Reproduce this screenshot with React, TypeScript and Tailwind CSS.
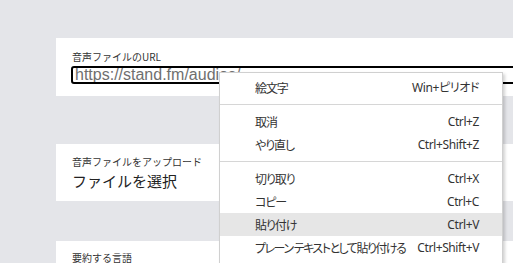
const JP = "font-['Noto_Sans_CJK_JP',sans-serif]";

type Item = { label: string; keys: string; active?: boolean; tight?: boolean } | 'sep';

const MENU: Item[] = [
  { label: '絵文字', keys: 'Win+ピリオド' },
  'sep',
  { label: '取消', keys: 'Ctrl+Z' },
  { label: 'やり直し', keys: 'Ctrl+Shift+Z' },
  'sep',
  { label: '切り取り', keys: 'Ctrl+X' },
  { label: 'コピー', keys: 'Ctrl+C' },
  { label: '貼り付け', keys: 'Ctrl+V', active: true },
  { label: 'プレーン\u00a0テキストとして貼り付ける', keys: 'Ctrl+Shift+V', tight: true },
];

function ContextMenu() {
  return (
    <div className="absolute left-[219px] top-[72px] w-[284px] border border-[#d0d0d0] bg-white pt-[3px] pb-2 shadow-[2px_2px_3px_rgba(0,0,0,0.18)]">
      {MENU.map((item, i) =>
        item === 'sep' ? (
          <div key={i} className="py-[5px]">
            <div className="h-px bg-[#d6d6d6]" />
          </div>
        ) : (
          <div
            key={i}
            className={
              'flex h-[23px] items-center justify-between gap-2 whitespace-nowrap pl-[35px] pr-[23px] text-[12px] text-[#333] ' +
              (item.active ? 'bg-[#e6e6e6]' : '')
            }
          >
            <span
              className={
                `${JP} [font-feature-settings:'palt'] ` +
                (item.tight ? 'tracking-[-1.5px]' : 'tracking-[-1.1px]')
              }
            >
              {item.label}
            </span>
            <span className="font-['Noto_Sans','Noto_Sans_CJK_JP',sans-serif] tracking-[-0.4px] [font-feature-settings:'palt']">
              {item.keys}
            </span>
          </div>
        ),
      )}
    </div>
  );
}

export default function App() {
  return (
    <div className="relative h-[263px] w-[513px] overflow-hidden bg-[#e4e5e9] pl-[56px] pt-[38px]">
      <section className="h-[58px] bg-white pl-4 pt-3">
        <p className={`${JP} text-[10px] leading-[14px] text-[#333]`}>音声ファイルのURL</p>
        <div className="mt-[2px] ml-[-1px] h-[18px] w-[480px] overflow-hidden whitespace-nowrap rounded-[3px] border-2 border-black pl-[2px] font-['Liberation_Sans',sans-serif] text-[16px] leading-[13px] text-[#6f6f6f]">
          https://stand.fm/audios/
        </div>
      </section>

      <section className="mt-12 h-[57px] bg-white pl-4 pt-[11px]">
        <p className={`${JP} text-[10px] leading-[14px] text-[#333]`}>音声ファイルをアップロード</p>
        <p className={`${JP} mt-px text-[15px] leading-[22px] text-[#222]`}>ファイルを選択</p>
      </section>

      <section className="mt-10 h-[40px] bg-white pl-4 pt-[10px]">
        <p className={`${JP} text-[10px] leading-[14px] text-[#333]`}>要約する言語</p>
      </section>

      <ContextMenu />
    </div>
  );
}
